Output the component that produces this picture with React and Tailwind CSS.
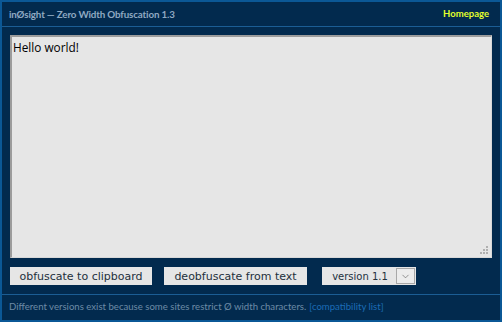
import { ChevronDown } from "lucide-react";

const App = () => {
  return (
    <div className="w-[502px] h-[322px] bg-[#022a4e] border-2 border-[#0b5896] flex flex-col font-['Lato',sans-serif]">
      <div className="h-[25px] flex items-center justify-between pl-[7px] pr-[11px] border-b border-[#1b5d94]">
        <span className="text-[9.8px] font-bold text-[#8fa9c2] tracking-[-0.15px]">inØsight — Zero Width Obfuscation 1.3</span>
        <a className="text-[9.5px] font-bold text-[#e4ff2c]">Homepage</a>
      </div>
      <div className="flex-1 flex flex-col px-[8px] pt-[8px]">
        <div className="relative h-[223px] bg-[#e6e6e6] border-t-2 border-l-2 border-[#9c9c9c] border-r border-b border-r-[#d8d8d8] border-b-[#d8d8d8]">
          <div className="pl-[1px] pt-[2px] text-[11.8px] text-black font-['Open_Sans',sans-serif] leading-[16px]">Hello world!</div>
          <div className="absolute right-[3px] bottom-[3px] grid grid-cols-3 gap-[1px] w-[8px]">
            <span />
            <span />
            <span className="w-[2px] h-[2px] bg-[#b0b0b0]" />
            <span />
            <span className="w-[2px] h-[2px] bg-[#b0b0b0]" />
            <span className="w-[2px] h-[2px] bg-[#b0b0b0]" />
            <span className="w-[2px] h-[2px] bg-[#b0b0b0]" />
            <span className="w-[2px] h-[2px] bg-[#b0b0b0]" />
            <span className="w-[2px] h-[2px] bg-[#b0b0b0]" />
          </div>
        </div>
        <div className="flex items-center mt-[9px] font-['DejaVu_Sans',sans-serif] text-[11px] text-[#23303c]">
          <button className="h-[18px] w-[142px] bg-[#e6e6e6] leading-none">obfuscate to clipboard</button>
          <button className="ml-[12px] h-[18px] w-[143px] bg-[#e6e6e6] leading-none">deobfuscate from text</button>
          <div className="ml-[15px] h-[18px] w-[94px] bg-[#e6e6e6] flex items-center">
            <span className="flex-1 text-center pl-[2px] text-[10px]">version 1.1</span>
            <span className="w-[19px] h-[16px] mr-[1px] border border-[#a8a8a8] bg-[#ececec] flex items-center justify-center">
              <ChevronDown size={11} strokeWidth={1.3} className="text-[#555]" />
            </span>
          </div>
        </div>
      </div>
      <div className="h-[26px] mt-[5px] border-t border-[#1b5d94] flex items-center px-[7px] text-[9.6px]">
        <span className="text-[#6d8aa6]">Different versions exist because some sites restrict Ø width characters.</span>
        <a className="ml-[3px] text-[#1c6cb6]">[compatibility list]</a>
      </div>
    </div>
  );
};

export default App;
